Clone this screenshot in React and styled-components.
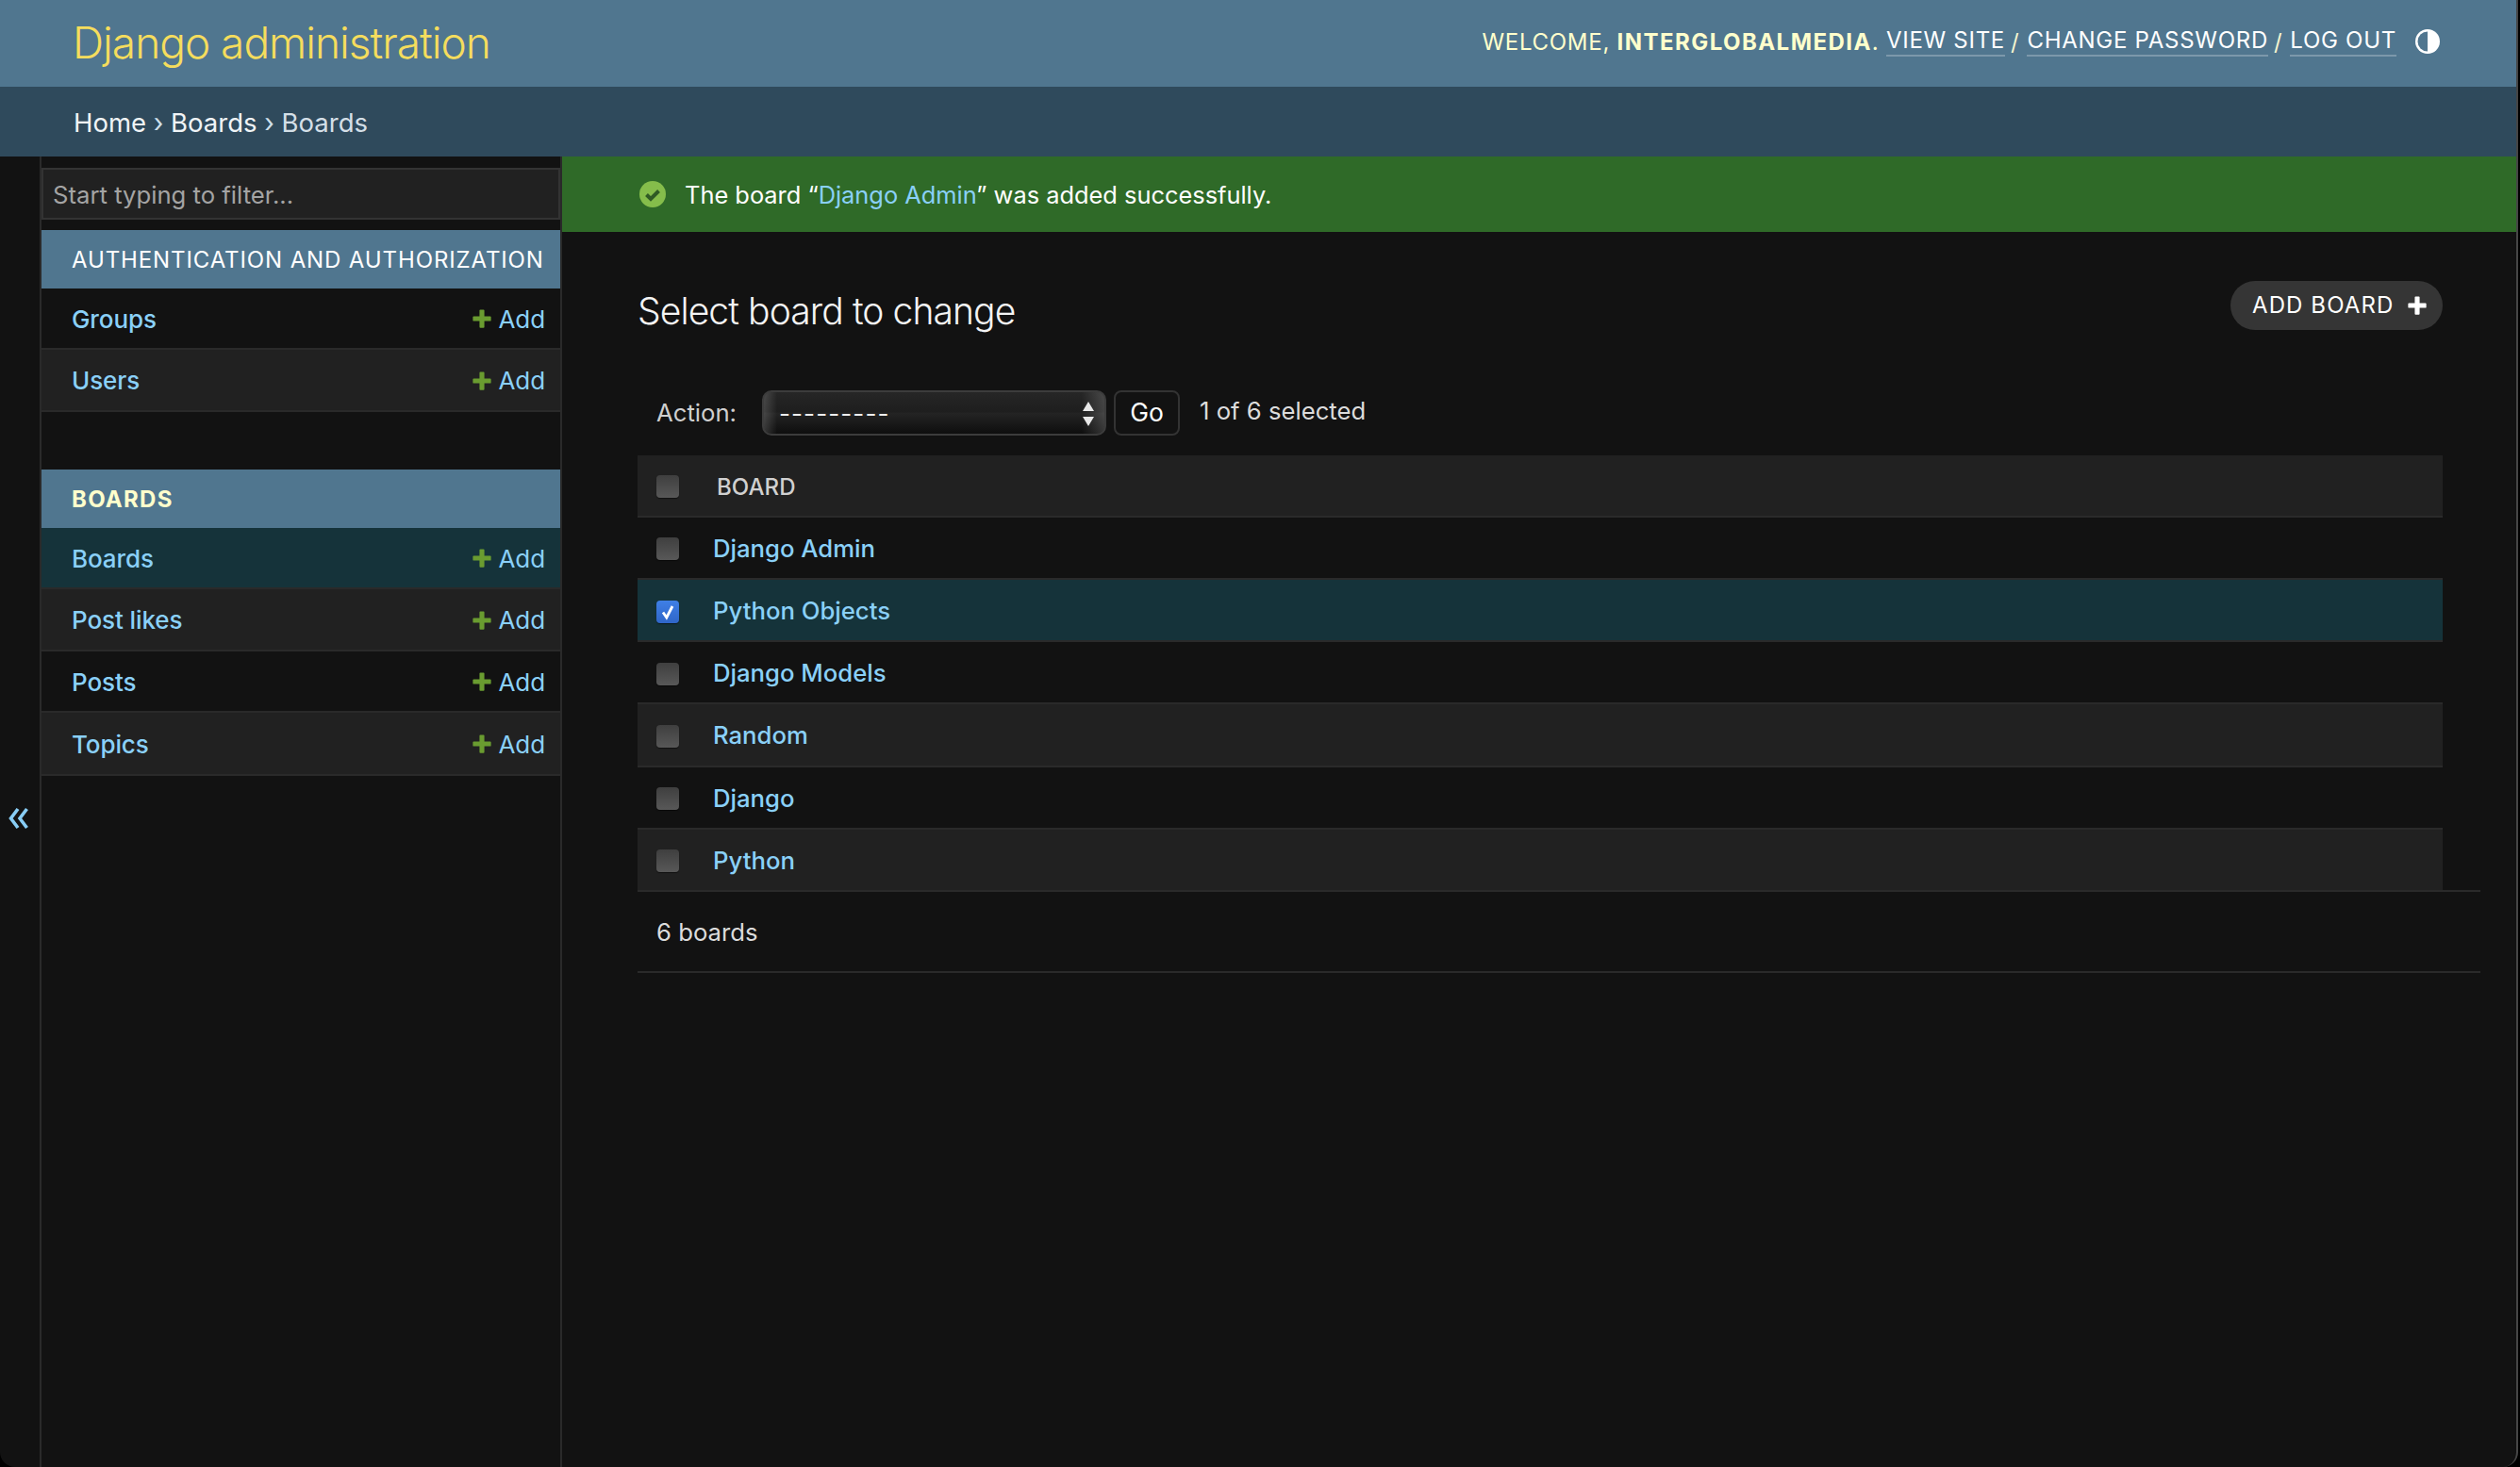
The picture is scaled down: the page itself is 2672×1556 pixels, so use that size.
import React from "react";
import styled, { createGlobalStyle } from "styled-components";

const Global = createGlobalStyle`
  html, body { margin: 0; padding: 0; background: #000; }
  body { font-family: Inter, "Liberation Sans", sans-serif; color: #eee; }
  * { box-sizing: border-box; }
  a { text-decoration: none; }
`;

const Frame = styled.div`
  width: 2670px;
  height: 1556px;
  border-right: 2px solid rgba(255, 255, 255, 0.22);
  border-bottom-right-radius: 16px;
  border-bottom-left-radius: 16px;
  background: #121212;
  display: flex;
  flex-direction: column;
  overflow: hidden;
`;

const Header = styled.header`
  height: 92px;
  flex: none;
  background: #50768f;
  display: flex;
  align-items: center;
  justify-content: space-between;
  padding: 0 80px 0 77px;
`;

const Brand = styled.a`
  font-size: 46px;
  font-weight: 300;
  letter-spacing: -1px;
  color: #f5dd5d;
  line-height: 1;
  position: relative;
  top: -1px;
`;

const UserTools = styled.div`
  display: flex;
  align-items: center;
  font-size: 24px;
  font-weight: 400;
  letter-spacing: 0.72px;
  color: #ffc;
  text-transform: uppercase;
  white-space: pre;
  position: relative;
  top: -2px;
`;

const UserName = styled.strong`
  font-weight: 700;
  letter-spacing: 1.45px;
`;

const ToolLink = styled.a`
  color: #fff;
  border-bottom: 2px solid rgba(255, 255, 255, 0.25);
  line-height: 30px;
`;

const Slash = styled.span`
  color: #f5f5d0;
  padding: 0 8px 0 6px;
`;

const ThemeButton = styled.span`
  display: inline-flex;
  margin-left: 19px;
  width: 28px;
  height: 28px;
`;

const Breadcrumbs = styled.nav`
  height: 74px;
  flex: none;
  background: #2f4a5c;
  display: flex;
  align-items: center;
  padding: 1px 0 0 78px;
  font-size: 27.5px;
  color: #cfe0ec;
  white-space: pre;
`;

const Crumb = styled.a`
  color: ${(p) => (p.$muted ? "#d4dfe7" : "#f0f4f6")};
`;

const Main = styled.div`
  flex: 1;
  display: flex;
  min-height: 0;
`;

const ToggleColumn = styled.div`
  width: 44px;
  flex: none;
  border-right: 2px solid #2a2a2a;
  display: flex;
  align-items: center;
  justify-content: center;
  padding: 14px 2px 0 0;
  color: #88cdf5;
`;

const Sidebar = styled.aside`
  width: 552px;
  flex: none;
  border-right: 2px solid #2a2a2a;
  padding-top: 12px;
  display: flex;
  flex-direction: column;
`;

const Filter = styled.input`
  height: 55px;
  width: 550px;
  margin-bottom: 11px;
  border: 2px solid #333;
  background: #212121;
  color: #eee;
  font: 400 25.7px Inter, sans-serif;
  padding: 1px 10px 0;
  outline: none;
  &::placeholder { color: #a4a4a4; opacity: 1; }
`;

const Caption = styled.div`
  height: 62px;
  width: 550px;
  background: #50768f;
  display: flex;
  align-items: center;
  padding-left: 32px;
  font-size: 24px;
  font-weight: ${(p) => (p.$current ? 700 : 400)};
  letter-spacing: ${(p) => (p.$current ? "1.25px" : "0.88px")};
  color: ${(p) => (p.$current ? "#ffc" : "#fff")};
  text-transform: uppercase;
  white-space: nowrap;
`;

const ModelRow = styled.div`
  width: 550px;
  height: ${(p) => p.$h || 66}px;
  display: flex;
  align-items: center;
  justify-content: space-between;
  padding: 1px 16px 0 32px;
  font-size: 26px;
  font-weight: 500;
  letter-spacing: -0.1px;
  border-bottom: 2px solid #2a2a2a;
  background: ${(p) => (p.$bg === "sel" ? "#15333a" : p.$bg === "alt" ? "#212121" : "transparent")};
`;

const Link = styled.a`
  color: #8ad0f8;
`;

const TableLink = styled(Link)`
  margin-bottom: 2px;
  margin-left: -1px;
`;

const AddLink = styled.a`
  display: flex;
  align-items: center;
  gap: 7px;
  color: #8ad0f8;
  font-weight: 400;
`;

const Group = styled.section`
  margin-bottom: ${(p) => p.$gap || 0}px;
`;

const Content = styled.main`
  flex: 1;
  min-width: 0;
  display: flex;
  flex-direction: column;
`;

const Message = styled.div`
  height: 80px;
  flex: none;
  background: #2f6a28;
  display: flex;
  align-items: center;
  gap: 20px;
  padding-left: 82px;
  font-size: 25.4px;
  color: #fff;
  white-space: pre;
`;

const Body = styled.div`
  padding: 52px 38px 0 80px;
`;

const TitleRow = styled.div`
  display: flex;
  align-items: flex-start;
  justify-content: space-between;
  width: 1914px;
  height: 116px;
`;

const Title = styled.h1`
  margin: 4px 0 0;
  font-size: 39px;
  font-weight: 300;
  letter-spacing: -0.9px;
  color: #f4f4f4;
  line-height: 56px;
`;

const AddButton = styled.a`
  width: 225px;
  height: 52px;
  border-radius: 26px;
  background: #353535;
  color: #fff;
  display: flex;
  align-items: center;
  gap: 14px;
  padding: 0 0 1px 23px;
  font-size: 24px;
  font-weight: 400;
  letter-spacing: 1.1px;
  text-transform: uppercase;
`;

const Actions = styled.div`
  height: 69px;
  padding-left: 20px;
  display: flex;
  align-items: flex-start;
  font-size: 25.7px;
`;

const ActionLabel = styled.span`
  color: #cfcfcf;
  width: 112px;
  line-height: 48px;
  flex: none;
`;

const SelectBox = styled.div`
  width: 365px;
  height: 48px;
  flex: none;
  position: relative;
  border: 2px solid #3c3c3c;
  border-radius: 10px;
  display: flex;
  align-items: center;
  padding-left: 16px;
  color: #eee;
  font-size: 26px;
  letter-spacing: 1.1px;
  background:
    linear-gradient(90deg, rgba(255, 255, 255, 0.16), rgba(255, 255, 255, 0) 14px),
    linear-gradient(270deg, rgba(255, 255, 255, 0.16), rgba(255, 255, 255, 0) 24px),
    linear-gradient(180deg, #262626 0%, #1e1e1e 48%, #242424 50%, #0e0e0e 100%);
`;

const SelectArrows = styled.svg`
  position: absolute;
  right: 10px;
  top: 9px;
`;

const GoButton = styled.button`
  width: 70px;
  height: 48px;
  margin-left: 8px;
  flex: none;
  background: #121212;
  border: 2px solid #333;
  border-radius: 8px;
  color: #fff;
  font: 400 26.5px Inter, sans-serif;
  padding: 0 0 2px;
`;

const Counter = styled.span`
  margin-left: 21px;
  color: #dcdcdc;
  line-height: 44px;
`;

const Table = styled.div`
  width: 1914px;
  display: flex;
  flex-direction: column;
`;

const TableRow = styled.div`
  height: ${(p) => p.$h || 66.2}px;
  display: flex;
  align-items: center;
  padding: 3px 0 0 20px;
  border-bottom: 2px solid #2a2a2a;
  font-size: 25.7px;
  font-weight: 500;
  background: ${(p) => (p.$bg === "sel" ? "#15333a" : p.$bg === "alt" ? "#212121" : "transparent")};
`;

const Check = styled.span`
  width: 24px;
  height: 24px;
  flex: none;
  border-radius: 4px;
  margin-right: ${(p) => p.$mr}px;
  display: flex;
  align-items: center;
  justify-content: center;
  background: ${(p) =>
    p.$on ? "linear-gradient(180deg, #3f7fe6, #2f66c8)" : "linear-gradient(180deg, #3f3f3f, #585858)"};
  box-shadow: 0 1px 1px rgba(0, 0, 0, 0.5);
`;

const ColumnHead = styled.span`
  color: #d0d0d0;
  font-size: 24px;
  font-weight: 500;
  letter-spacing: 0.1px;
  text-transform: uppercase;
  margin-left: -1px;
`;

const Paginator = styled.div`
  width: 1954px;
  height: 88px;
  margin-top: -2px;
  padding: 2px 0 0 20px;
  border-top: 2px solid #2a2a2a;
  border-bottom: 2px solid #2a2a2a;
  display: flex;
  align-items: center;
  font-size: 25.7px;
  color: #dcdcdc;
`;

const Plus = ({ size = 22, color = "#6a9c30" }) => (
  <svg width={size} height={size} viewBox="0 0 24 24">
    <path d="M9.2 2.5a1 1 0 0 1 1-1h3.6a1 1 0 0 1 1 1v6.7h6.7a1 1 0 0 1 1 1v3.6a1 1 0 0 1-1 1h-6.7v6.7a1 1 0 0 1-1 1h-3.6a1 1 0 0 1-1-1v-6.7H2.5a1 1 0 0 1-1-1v-3.6a1 1 0 0 1 1-1h6.7z" fill={color} />
  </svg>
);

const Model = ({ name, bg, h }) => (
  <ModelRow $bg={bg} $h={h}>
    <Link>{name}</Link>
    <AddLink><Plus />Add</AddLink>
  </ModelRow>
);

const rows = [
  { name: "Django Admin" },
  { name: "Python Objects", bg: "sel", on: true },
  { name: "Django Models" },
  { name: "Random", bg: "alt" },
  { name: "Django" },
  { name: "Python", bg: "alt" },
];

export default function App() {
  return (
    <Frame>
      <Global />
      <Header>
        <Brand>Django administration</Brand>
        <UserTools>
          Welcome, <UserName>interglobalmedia</UserName>.{" "}
          <ToolLink>View site</ToolLink>
          <Slash>/</Slash>
          <ToolLink>Change password</ToolLink>
          <Slash>/</Slash>
          <ToolLink>Log out</ToolLink>
          <ThemeButton>
            <svg width="28" height="28" viewBox="0 0 28 28">
              <circle cx="14" cy="14" r="13" fill="#fff" />
              <path d="M14 3.5a10.5 10.5 0 0 0 0 21z" fill="#50768f" />
            </svg>
          </ThemeButton>
        </UserTools>
      </Header>
      <Breadcrumbs>
        <Crumb>Home</Crumb> › <Crumb>Boards</Crumb> › <Crumb $muted>Boards</Crumb>
      </Breadcrumbs>
      <Main>
        <ToggleColumn>
          <svg width="24" height="26" viewBox="0 0 24 26" fill="none" stroke="currentColor" strokeWidth="3.6">
            <path d="M11 3 3.5 13l7.5 10M20.5 3 13 13l7.5 10" />
          </svg>
        </ToggleColumn>
        <Sidebar>
          <Filter placeholder="Start typing to filter..." />
          <Group $gap={61}>
            <Caption>Authentication and Authorization</Caption>
            <Model name="Groups" h={65} />
            <Model name="Users" bg="alt" />
          </Group>
          <Group>
            <Caption $current>Boards</Caption>
            <Model name="Boards" bg="sel" h={65} />
            <Model name="Post likes" bg="alt" />
            <Model name="Posts" h={65} />
            <Model name="Topics" bg="alt" h={67} />
          </Group>
        </Sidebar>
        <Content>
          <Message>
            <svg width="28" height="28" viewBox="0 0 28 28">
              <circle cx="14" cy="14" r="14" fill="#85bd4b" />
              <path d="M7.5 14.5 12 19l8.5-8.5" fill="none" stroke="#2f5a24" strokeWidth="4" />
            </svg>
            <span>The board “<Link>Django Admin</Link>” was added successfully.</span>
          </Message>
          <Body>
            <TitleRow>
              <Title>Select board to change</Title>
              <AddButton>Add board<Plus size={22} color="#fff" /></AddButton>
            </TitleRow>
            <Actions>
              <ActionLabel>Action:</ActionLabel>
              <SelectBox>
                ---------
                <SelectArrows width="14" height="28" viewBox="0 0 14 28">
                  <path d="M7 1l6 10H1zM7 27l6-10H1z" fill="#e8e8e8" />
                </SelectArrows>
              </SelectBox>
              <GoButton>Go</GoButton>
              <Counter>1 of 6 selected</Counter>
            </Actions>
            <Table>
              <TableRow $bg="alt" $h={65.8}>
                <Check $mr={41} />
                <ColumnHead>Board</ColumnHead>
              </TableRow>
              {rows.map((r) => (
                <TableRow key={r.name} $bg={r.bg}>
                  <Check $mr={37} $on={r.on}>
                    {r.on && (
                      <svg width="20" height="20" viewBox="0 0 20 20">
                        <path d="M5 10.5 8.8 16 15 4" fill="none" stroke="#fff" strokeWidth="2.8" />
                      </svg>
                    )}
                  </Check>
                  <TableLink>{r.name}</TableLink>
                </TableRow>
              ))}
            </Table>
            <Paginator>6 boards</Paginator>
          </Body>
        </Content>
      </Main>
    </Frame>
  );
}
